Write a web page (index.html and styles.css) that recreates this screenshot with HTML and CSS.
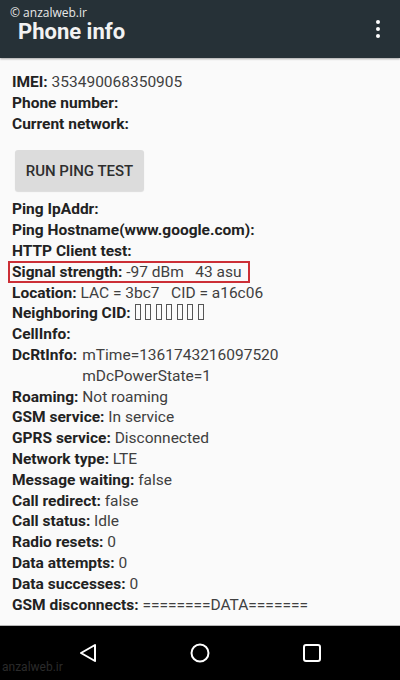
FILE: index.html
```html
<!DOCTYPE html>
<html>
<head>
  <title>Phone info</title>
  <link rel="stylesheet" href="styles.css">
</head>
<body>

  <div class="app-bar">
    <span class="watermark">&copy; anzalweb.ir</span>
    <h1>Phone info</h1>
    <div class="menu-dots"><span></span><span></span><span></span></div>
  </div>

  <div class="content">
    <div class="row"><b>IMEI:</b> 353490068350905</div>
    <div class="row"><b>Phone number:</b></div>
    <div class="row"><b>Current network:</b></div>

    <button class="ping-btn">RUN PING TEST</button>

    <div class="row"><b>Ping IpAddr:</b></div>
    <div class="row"><b>Ping Hostname(www.google.com):</b></div>
    <div class="row"><b>HTTP Client test:</b></div>
    <div class="row"><span class="marked"><b>Signal strength:</b> -97 dBm&nbsp;&nbsp; 43 asu</span></div>
    <div class="row"><b>Location:</b> LAC = 3bc7&nbsp;&nbsp; CID = a16c06</div>
    <div class="row"><b>Neighboring CID:</b> <span class="tofu"></span><span class="tofu"></span><span class="tofu"></span><span class="tofu"></span><span class="tofu"></span><span class="tofu"></span><span class="tofu"></span></div>
    <div class="row"><b>CellInfo:</b></div>
    <div class="row split">
      <b>DcRtInfo:</b>
      <div>mTime=1361743216097520<br>mDcPowerState=1</div>
    </div>
    <div class="row"><b>Roaming:</b> Not roaming</div>
    <div class="row"><b>GSM service:</b> In service</div>
    <div class="row"><b>GPRS service:</b> Disconnected</div>
    <div class="row"><b>Network type:</b> LTE</div>
    <div class="row"><b>Message waiting:</b> false</div>
    <div class="row"><b>Call redirect:</b> false</div>
    <div class="row"><b>Call status:</b> Idle</div>
    <div class="row"><b>Radio resets:</b> 0</div>
    <div class="row"><b>Data attempts:</b> 0</div>
    <div class="row"><b>Data successes:</b> 0</div>
    <div class="row"><b>GSM disconnects:</b> ========DATA=======</div>
  </div>

  <div class="nav-bar">
    <span class="nav-mark">anzalweb.ir</span>
    <svg width="20" height="20" viewBox="0 0 20 20">
      <path d="M17 2 L3 10 L17 18 Z" fill="none" stroke="#fff" stroke-width="2" stroke-linejoin="round"/>
    </svg>
    <svg width="22" height="22" viewBox="0 0 22 22">
      <circle cx="11" cy="11" r="8.5" fill="none" stroke="#fff" stroke-width="2"/>
    </svg>
    <svg width="20" height="20" viewBox="0 0 20 20">
      <rect x="2" y="2" width="16" height="16" rx="2" fill="none" stroke="#fff" stroke-width="2"/>
    </svg>
  </div>

</body>
</html>
```

FILE: styles.css
```css
body {
  margin: 0;
  width: 400px;
  height: 680px;
  display: flex;
  flex-direction: column;
  font-family: Roboto, 'Noto Sans', sans-serif;
  background: #fafafa;
  overflow: hidden;
}

.app-bar {
  position: relative;
  height: 58px;
  background: #263137;
  display: flex;
  align-items: center;
  justify-content: space-between;
  padding: 0 20px 0 18px;
  box-shadow: 0 1px 2px rgba(0, 0, 0, 0.35);
}

.app-bar h1 {
  margin: 6px 0 0;
  font-size: 22px;
  line-height: 1;
  font-weight: 700;
  color: #f2f2f2;
}

.watermark {
  position: absolute;
  left: 10px;
  top: 7px;
  font-size: 12px;
  line-height: 12px;
  color: #e8e8e8;
  font-family: 'Open Sans', sans-serif;
}

.menu-dots {
  display: flex;
  flex-direction: column;
  gap: 3px;
}

.menu-dots span {
  width: 4px;
  height: 4px;
  border-radius: 50%;
  background: #fff;
}

.content {
  flex: 1;
  padding: 14px 12px 0;
  font-size: 15.5px;
  color: #404040;
  border-bottom: 1px solid #b5b5b5;
}

.row {
  line-height: 20.8px;
  white-space: nowrap;
}

.row b {
  color: #222;
  font-weight: 700;
}

.split {
  display: flex;
  gap: 5px;
}

.marked {
  display: inline-block;
  margin: -1px 0 -1px -4px;
  padding: 0 6px 0 2px;
  border: 2px solid #cc2f36;
  line-height: 18px;
}

.tofu {
  display: inline-block;
  width: 4px;
  height: 14px;
  border: 1px solid #555;
  margin-right: 4.5px;
  vertical-align: -2px;
}

.ping-btn {
  display: block;
  margin: 16px 0 8px 3px;
  width: 129px;
  height: 41px;
  background: #dcdcdc;
  border: none;
  border-radius: 3px;
  font-family: Roboto, sans-serif;
  font-size: 15px;
  font-weight: 500;
  color: #2e2e2e;
  box-shadow: 0 1px 1px rgba(0, 0, 0, 0.12);
}

.nav-bar {
  position: relative;
  height: 54px;
  background: #000;
  display: flex;
  align-items: center;
  justify-content: space-between;
  padding: 0 78px 0 78px;
}

.nav-mark {
  position: absolute;
  left: 2px;
  bottom: 6px;
  font-size: 12px;
  color: #2b2b2b;
}
```
